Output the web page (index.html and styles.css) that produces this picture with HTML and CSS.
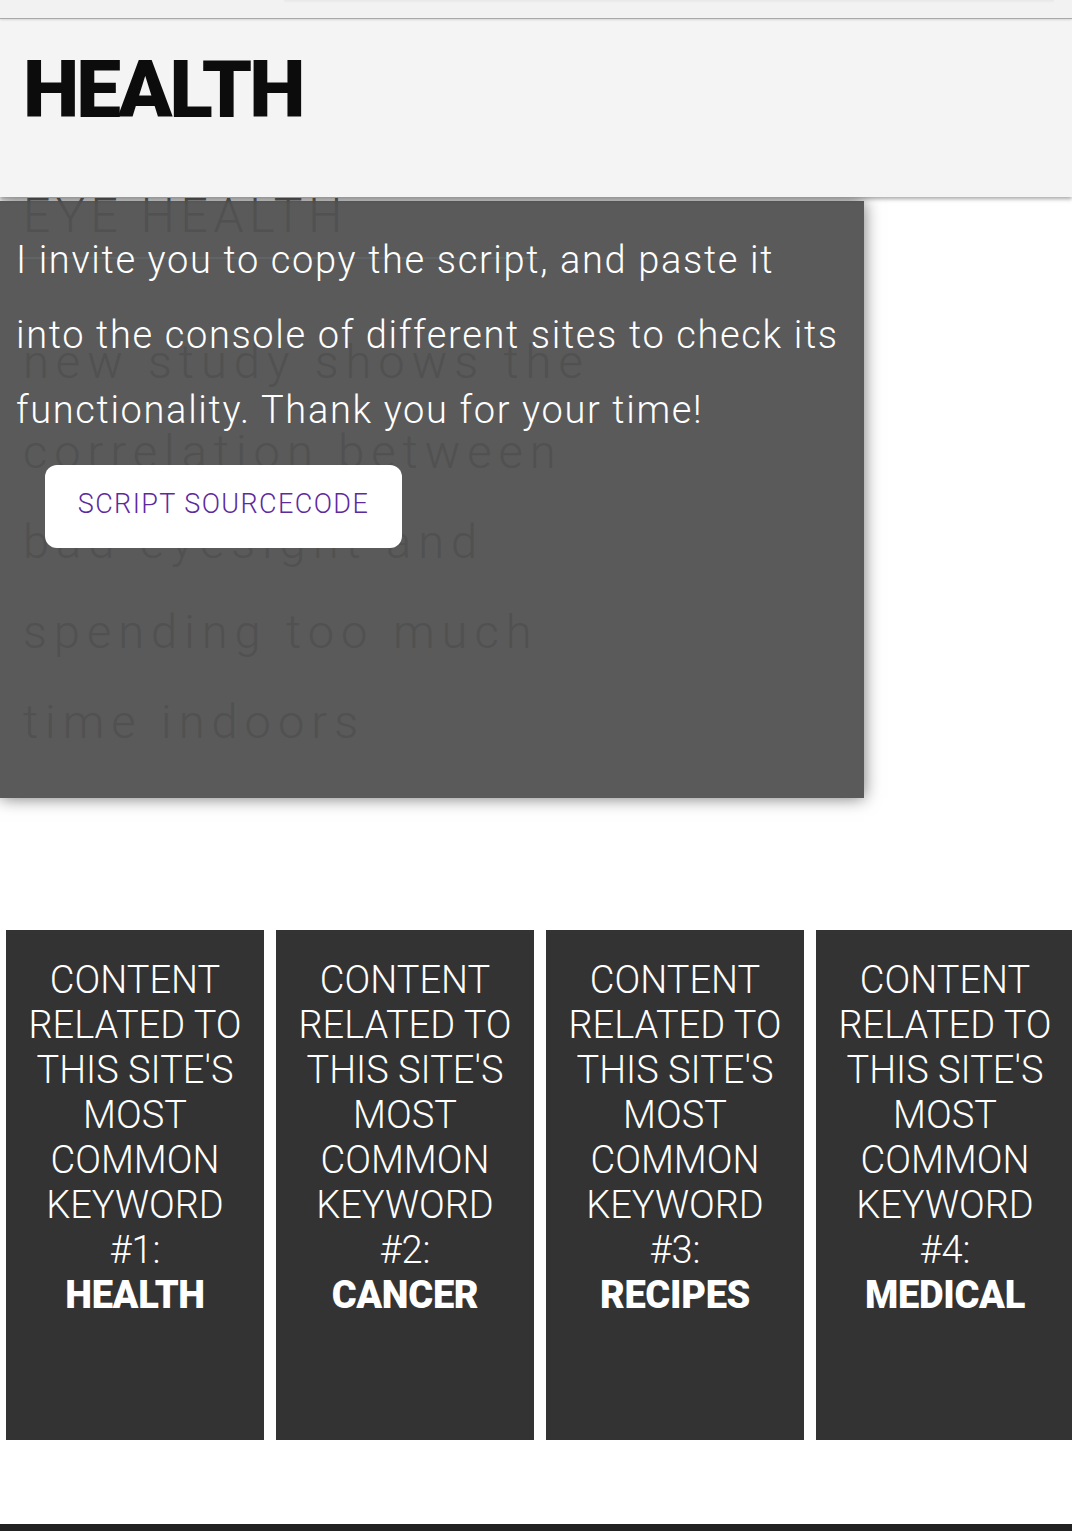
FILE: index.html
```html
<!DOCTYPE html>
<html lang="en">
<head>
<meta charset="utf-8">
<title>Health</title>
<link rel="stylesheet" href="styles.css">
</head>
<body>
<div class="topbar"><div class="search"></div></div>
<header class="site-header">
  <h1 class="site-title">HEALTH</h1>
</header>
<main class="stage">
  <div class="panel"></div>
  <article class="ghost">
    <h2 class="ghost-title">EYE HEALTH</h2>
    <hr class="ghost-rule">
    <p class="ghost-text">new study shows the<br>correlation between<br>bad eyesight and<br>spending too much<br>time indoors</p>
  </article>
  <div class="invite">
    <p class="invite-text">I invite you to copy the script, and paste it<br>into the console of different sites to check its<br>functionality. Thank you for your time!</p>
    <button class="source-btn">SCRIPT SOURCECODE</button>
  </div>
</main>
<section class="cards">
  <div class="card">CONTENT RELATED TO THIS SITE'S MOST COMMON KEYWORD #1:<br><b class="kw">HEALTH</b></div>
  <div class="card">CONTENT RELATED TO THIS SITE'S MOST COMMON KEYWORD #2:<br><b class="kw">CANCER</b></div>
  <div class="card">CONTENT RELATED TO THIS SITE'S MOST COMMON KEYWORD #3:<br><b class="kw">RECIPES</b></div>
  <div class="card">CONTENT RELATED TO THIS SITE'S MOST COMMON KEYWORD #4:<br><b class="kw">MEDICAL</b></div>
</section>
<footer class="site-footer"></footer>
</body>
</html>
```
FILE: styles.css
```css
html, body {
  margin: 0;
  padding: 0;
  background: #ffffff;
  overflow-x: hidden;
}
body {
  font-family: Roboto, "Liberation Sans", sans-serif;
  width: 1072px;
}
.topbar {
  height: 18px;
  background: #f2f2f2;
  border-bottom: 1px solid #a9a9a9;
  box-shadow: 0 1px 2px rgba(0,0,0,0.12);
  display: flex;
  position: relative;
  z-index: 6;
}
.search {
  margin-left: 284px;
  width: 770px;
  height: 1px;
  background: #e9e9e9;
  box-shadow: 0 1px 2px rgba(0,0,0,0.05);
}
.site-header {
  height: 178px;
  background: #f4f4f4;
  box-shadow: 0 2px 4px rgba(0,0,0,0.35);
  position: relative;
  z-index: 5;
  padding: 0 0 0 23px;
  box-sizing: border-box;
}
.site-title {
  margin: 0;
  padding-top: 21px;
  font-size: 80px;
  line-height: 100px;
  font-weight: 900;
  letter-spacing: -3px;
  color: #0c0c0c;
}
.stage {
  display: grid;
  grid-template-columns: 864px;
  align-items: start;
}
.panel, .ghost, .invite {
  grid-area: 1 / 1;
}
.panel {
  margin-top: 4px;
  height: 597px;
  background: #5a5a5a;
  box-shadow: 0 0 16px rgba(0,0,0,0.55);
}
.ghost {
  margin-top: -14px;
  padding-left: 23px;
  color: #515151;
  font-weight: 300;
}
.ghost-title {
  margin: 0;
  font-size: 48px;
  line-height: 66px;
  font-weight: 300;
  letter-spacing: 5.7px;
}
.ghost-rule {
  margin: 8px 0 0 -4px;
  width: 520px;
  height: 2px;
  border: 0;
  background: #5f6566;
}
.ghost-text {
  margin: 58px 0 0;
  font-size: 47px;
  line-height: 90px;
  letter-spacing: 7px;
}
.invite {
  margin-top: 26px;
  padding-left: 16px;
}
.invite-text {
  margin: 0;
  color: #ffffff;
  font-size: 38px;
  font-weight: 300;
  line-height: 75px;
  letter-spacing: 1.65px;
  white-space: nowrap;
}
.source-btn {
  display: block;
  margin: 17px 0 0 29px;
  width: 357px;
  height: 83px;
  border: 0;
  border-radius: 12px;
  background: #ffffff;
  color: #5d2a9e;
  font-family: Roboto, "Liberation Sans", sans-serif;
  font-size: 27px;
  font-weight: 300;
  letter-spacing: 1.4px;
  padding: 0 0 6px;
}
.cards {
  display: flex;
  gap: 12px;
  padding-left: 6px;
  margin-top: 132px;
  overflow: hidden;
}
.card {
  flex: 0 0 258px;
  height: 510px;
  box-sizing: border-box;
  padding: 28px 14px 0;
  background: #333333;
  color: #ffffff;
  text-align: center;
  font-size: 38px;
  font-weight: 300;
  line-height: 45px;
}
.kw {
  font-weight: 900;
  letter-spacing: -0.3px;
}
.site-footer {
  margin-top: 84px;
  height: 40px;
  background: #222222;
}
```
